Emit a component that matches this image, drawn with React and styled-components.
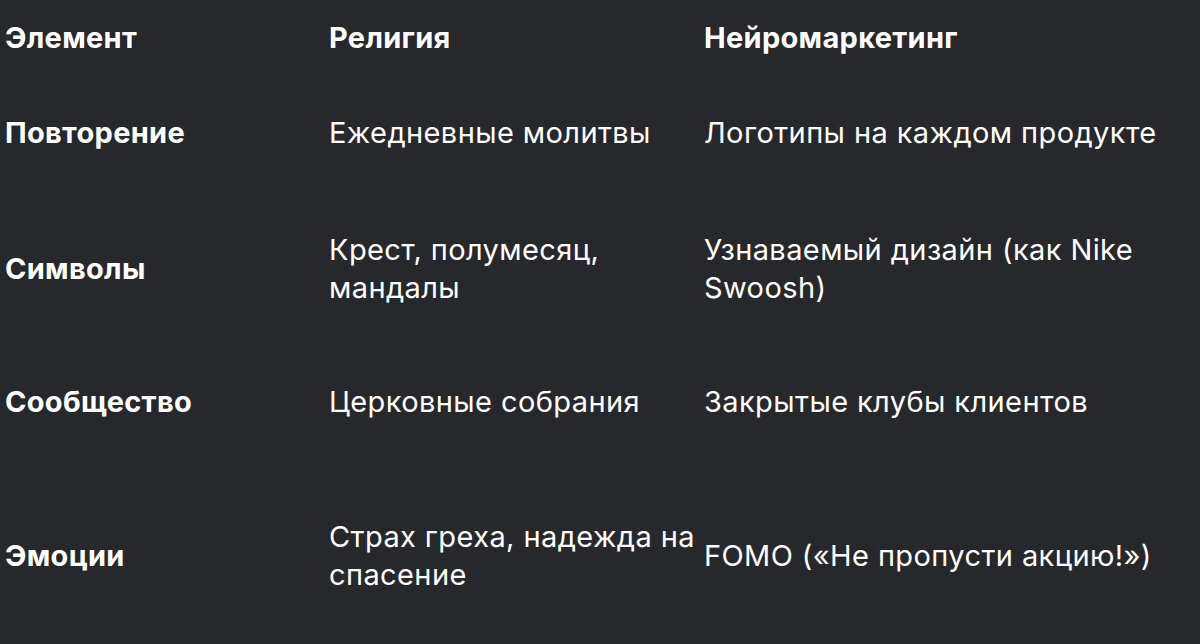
import React from "react";
import styled, { createGlobalStyle } from "styled-components";

const GlobalStyle = createGlobalStyle`
  html, body {
    margin: 0;
    padding: 0;
    background: #27282c;
  }
  body {
    font-family: Inter, "Noto Sans", sans-serif;
    color: #ffffff;
    overflow: hidden;
  }
`;

const Table = styled.div`
  width: 1200px;
  height: 644px;
  padding-left: 5px;
  box-sizing: border-box;
  display: grid;
  grid-template-columns: 324px 375px 1fr;
  grid-auto-rows: auto;
`;

const Row = styled.div`
  display: contents;
`;

const Cell = styled.div`
  height: ${(p) => p.$h}px;
  display: flex;
  align-items: center;
  font-size: 29px;
  line-height: 38px;
  font-weight: ${(p) => (p.$bold ? 700 : 400)};
  letter-spacing: ${(p) => (p.$bold ? "0.3px" : "0.4px")};
`;

const rows = [
  { h: 76, head: true, cells: ["Элемент", "Религия", "Нейромаркетинг"] },
  { h: 114, cells: ["Повторение", "Ежедневные молитвы", "Логотипы на каждом продукте"] },
  { h: 158, cells: ["Символы", "Крест, полумесяц, мандалы", "Узнаваемый дизайн (как Nike Swoosh)"] },
  { h: 108, cells: ["Сообщество", "Церковные собрания", "Закрытые клубы клиентов"] },
  { h: 200, cells: ["Эмоции", "Страх греха, надежда на спасение", "FOMO («Не пропусти акцию!»)"] },
];

export default function App() {
  return (
    <>
      <GlobalStyle />
      <Table>
        {rows.map((r, i) => (
          <Row key={i}>
            {r.cells.map((c, j) => (
              <Cell key={j} $h={r.h} $bold={r.head || j === 0}>
                {c}
              </Cell>
            ))}
          </Row>
        ))}
      </Table>
    </>
  );
}
